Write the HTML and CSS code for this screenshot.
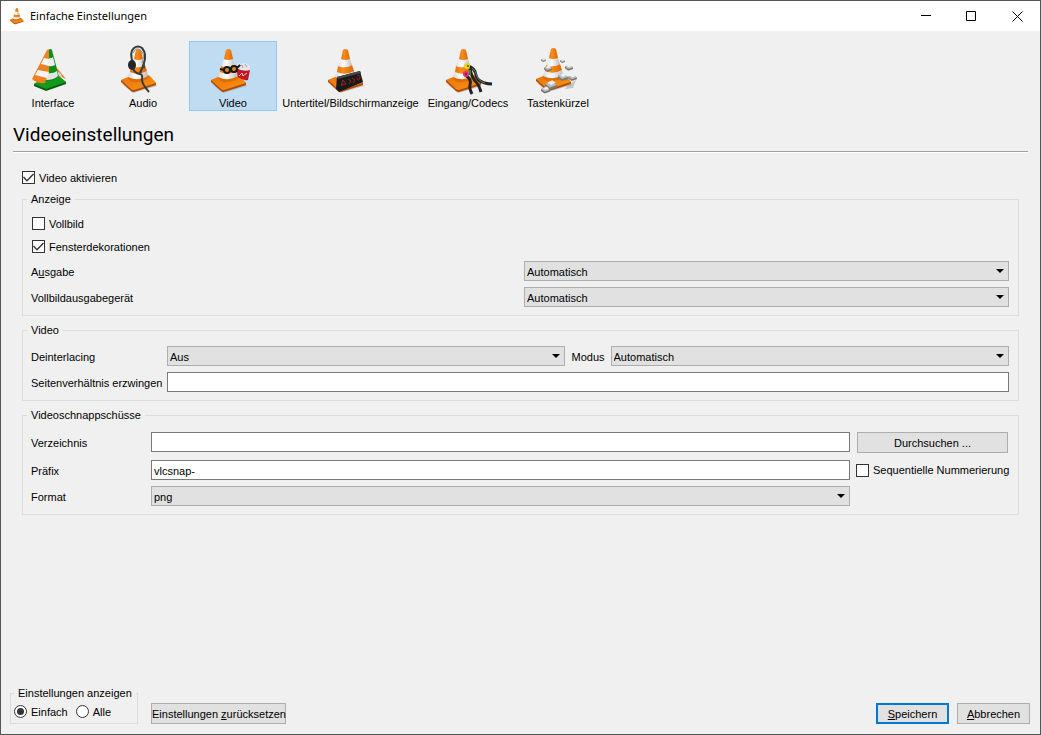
FILE: index.html
```html
<!doctype html>
<html lang="de">
<head>
<meta charset="utf-8">
<title>Einfache Einstellungen</title>
<link rel="stylesheet" href="styles.css">
</head>
<body>

<!-- shared icon parts -->
<svg class="defs" width="0" height="0" aria-hidden="true">
  <defs>
    <linearGradient id="orange" x1="0" x2="1" y1="0" y2="0">
      <stop offset="0" stop-color="#e27208"/>
      <stop offset=".35" stop-color="#fa8c18"/>
      <stop offset="1" stop-color="#dc6600"/>
    </linearGradient>
    <linearGradient id="white" x1="0" x2="1" y1="0" y2="0">
      <stop offset="0" stop-color="#dadada"/>
      <stop offset=".4" stop-color="#ffffff"/>
      <stop offset="1" stop-color="#bdbdbd"/>
    </linearGradient>
    <linearGradient id="base" x1="0" x2="1" y1="0" y2="1">
      <stop offset="0" stop-color="#e87408"/>
      <stop offset="1" stop-color="#fb9018"/>
    </linearGradient>
  </defs>
  <symbol id="cone" viewBox="0 0 48 48">
    <path d="M3 38L14 47L38 40L35 37L14 42Z" fill="#777" opacity=".35"/>
    <path d="M2 34L30 30L37 37V39L15 46Q13 46 12 45L2 36Z" fill="#b04c00"/>
    <path d="M2 34L9 31L28 29Q30 29 31 30L37 37L15 44Q13 44 12 43Z" fill="url(#base)"/>
    <path d="M9 32Q11 37 19 36Q28 35 30 31L29 29H10Z" fill="#e06c04"/>
    <path d="M11 25Q19 30 28 25L29 30Q20 36 9 31Z" fill="url(#white)"/>
    <path d="M12 20Q19 23 26 19L28 25Q19 30 11 26Z" fill="url(#orange)"/>
    <path d="M15 13Q19 15 24 13L26 19Q19 23 12 20Z" fill="url(#white)"/>
    <path d="M17 4Q19 2 22 4L24 13Q19 15 15 13Z" fill="url(#orange)"/>
  </symbol>
  <symbol id="key" viewBox="0 0 10 8">
    <path d="M0 3L6 1L10 4V6L4 8L0 5Z" fill="#777"/>
    <path d="M0 3L6 1L10 4L4 6Z" fill="#bbb"/>
    <path d="M2 2L6 0L9 2L5 4Z" fill="#eee"/>
  </symbol>
</svg>

<div class="window">

  <header class="titlebar">
    <svg class="app-icon" viewBox="0 1 40 47" aria-hidden="true"><use href="#cone" width="48" height="48"/></svg>
    <span class="title">Einfache Einstellungen</span>
    <button class="win-btn" aria-label="Minimieren"><svg width="11" height="11"><path d="M1 4.500H11"/></svg></button>
    <button class="win-btn" aria-label="Maximieren"><svg width="11" height="11"><path d="M.5 .5H9.500V9.500H.5Z"/></svg></button>
    <button class="win-btn" aria-label="Schließen"><svg width="11" height="11"><path d="M.5 .5L10.500 10.500M10.500 .5L.5 10.500"/></svg></button>
  </header>

  <nav class="toolbar">
    <button class="tool">
      <svg viewBox="0 0 48 48" aria-hidden="true">
        <path d="M27 21L37 33L33 31L27 29Z" fill="#e87a1c"/>
        <path d="M28 25L32 28L33 31L28 29Z" fill="#ddd"/>
        <path d="M5 38L28 30L37 36V38L17 45L5 40Z" fill="#075f0b"/>
        <path d="M5 38L14 32L30 30L37 36L17 43Z" fill="#139a1c"/>
        <path d="M19 4Q22 2 23 4L30 31Q25 36 16 35Z" fill="#0d8f18"/>
        <path d="M19 12Q22 13 24 11L26 19Q22 21 18 20Z" fill="#f0f0f0"/>
        <path d="M18 27Q24 28 28 25L29 30Q25 34 17 34Z" fill="#e4e4e4"/>
        <path d="M18 4Q19 3 20 4L20 25L16 37Q8 38 3 33Z" fill="#ef8120"/>
        <path d="M15 12L20 13L20 20L12 18Z" fill="#fafafa"/>
        <path d="M9 24L20 26L18 32L6 29Z" fill="#f4f4f4"/>
      </svg>
      Interface
    </button>
    <button class="tool">
      <svg viewBox="0 0 48 48" aria-hidden="true">
        <use href="#cone" width="48" height="48"/>
        <g fill="none" stroke="#333b40">
          <path d="M14 17Q10 6 15 2Q19 -1 23 2Q28 8 25 17Q23 23 21 27" stroke-width="2"/>
          <path d="M14 7Q18 -1 23 6Q26 10 23 17" stroke="#8b9297"/>
          <path d="M14 22Q15 27 21 28Q24 28 23 34Q23 38 30 46" stroke-width="2"/>
        </g>
        <ellipse cx="13" cy="19" rx="4" ry="5" fill="#24282b"/>
        <ellipse cx="25" cy="20" rx="1" ry="3" fill="#444"/>
      </svg>
      Audio
    </button>
    <button class="tool active">
      <svg viewBox="0 0 48 48" aria-hidden="true">
        <use href="#cone" width="48" height="48"/>
        <path d="M27 22L41 24L39 34Q34 35 29 31Z" fill="#c41622"/>
        <path d="M28 20Q28 16 32 18Q35 16 38 18Q42 19 41 24Q34 26 27 22Z" fill="#e4e5ec"/>
        <path d="M30 20L33 19L34 22M36 18L38 21" stroke="#9da1b8" fill="none"/>
        <path d="M30 30L33 27L34 30L38 27" stroke="#f6c9cb" fill="none"/>
        <g fill="#d98a1f" stroke="#1b1713" stroke-width="2">
          <ellipse cx="18" cy="24" rx="3" ry="3"/>
          <ellipse cx="25" cy="23" rx="3" ry="3"/>
          <path d="M11 23L15 24M28 22L31 19"/>
        </g>
      </svg>
      Video
    </button>
    <button class="tool wide">
      <svg viewBox="0 0 48 48" aria-hidden="true">
        <use href="#cone" x="-1" width="48" height="48"/>
        <path d="M10 31L33 25L36 36L12 46L9 43Z" fill="#191919"/>
        <path d="M10 31L33 25L34 27L11 33Z" fill="#484848"/>
        <path d="M14 40L16 34L19 38L15 39M21 33L24 35L22 38M25 32L28 34L26 37M30 30Q33 28 33 32Q31 36 30 32" fill="none" stroke="#a81f22"/>
      </svg>
      Untertitel/Bildschirmanzeige
    </button>
    <button class="tool">
      <svg viewBox="0 0 48 48" aria-hidden="true">
        <use href="#cone" width="48" height="48"/>
        <g fill="none" stroke="#222" stroke-width="3">
          <path d="M24 20Q31 22 32 29Q33 37 48 38"/>
          <path d="M26 23Q28 32 32 36Q35 39 37 46"/>
          <path d="M21 29Q28 33 26 39Q25 42 28 48"/>
        </g>
        <path d="M28 22Q32 25 33 30Q34 35 41 37" fill="none" stroke="#777"/>
        <path d="M26 24V29" stroke="#189325" stroke-width="2"/>
        <circle cx="23" cy="20" r="3" fill="#e7d322"/>
        <circle cx="24" cy="20" r="1" fill="#6a5b07"/>
        <circle cx="22" cy="28" r="3" fill="#e82c75"/>
        <circle cx="22" cy="28" r="1" fill="#8c0d3d"/>
      </svg>
      Eingang/Codecs
    </button>
    <button class="tool">
      <svg viewBox="0 0 48 48" aria-hidden="true">
        <use href="#cone" y="-1" width="48" height="48"/>
        <path d="M34 39L42 34L39 42L31 43Z" fill="#999" opacity=".5"/>
        <use href="#key" x="7" y="12" width="5" height="4"/>
        <use href="#key" x="10" y="19" width="8" height="7"/>
        <use href="#key" x="26" y="13" width="5" height="4"/>
        <use href="#key" x="31" y="18" width="8" height="7"/>
        <use href="#key" x="24" y="27" width="10" height="8"/>
        <use href="#key" x="34" y="28" width="9" height="7"/>
        <use href="#key" x="11" y="34" width="12" height="10"/>
        <use href="#key" x="7" y="40" width="9" height="8"/>
      </svg>
      Tastenkürzel
    </button>
  </nav>

  <h1>Videoeinstellungen</h1>

  <main>
    <label class="check"><input type="checkbox" checked>Video aktivieren</label>

    <fieldset class="group display">
      <legend>Anzeige</legend>
      <label class="check"><input type="checkbox">Vollbild</label>
      <label class="check"><input type="checkbox" checked>Fensterdekorationen</label>
      <div class="form halves">
        <label for="output">A<u>u</u>sgabe</label>
        <span class="select"><select id="output"><option>Automatisch</option></select></span>
        <label for="device">Vollbildausgabegerät</label>
        <span class="select"><select id="device"><option>Automatisch</option></select></span>
      </div>
    </fieldset>

    <fieldset class="group">
      <legend>Video</legend>
      <div class="form video">
        <label for="deint">Deinterlacing</label>
        <span class="select"><select id="deint"><option>Aus</option></select></span>
        <label for="mode">Modus</label>
        <span class="select"><select id="mode"><option>Automatisch</option></select></span>
        <label for="ratio">Seitenverhältnis erzwingen</label>
        <input class="field span" type="text" id="ratio">
      </div>
    </fieldset>

    <fieldset class="group">
      <legend>Videoschnappschüsse</legend>
      <div class="form snapshots">
        <label for="dir">Verzeichnis</label>
        <input class="field" type="text" id="dir">
        <button class="btn">Durchsuchen ...</button>
        <label for="prefix">Präfix</label>
        <input class="field" type="text" id="prefix" value="vlcsnap-">
        <label class="check"><input type="checkbox">Sequentielle Nummerierung</label>
        <label for="format">Format</label>
        <span class="select"><select id="format"><option>png</option></select></span>
      </div>
    </fieldset>
  </main>

  <footer>
    <fieldset class="group show">
      <legend>Einstellungen anzeigen</legend>
      <label class="check"><input type="radio" name="show" checked>Einfach</label>
      <label class="check"><input type="radio" name="show">Alle</label>
    </fieldset>
    <button class="btn reset">Einstellungen <u>z</u>urücksetzen</button>
    <button class="btn default"><u>S</u>peichern</button>
    <button class="btn"><u>A</u>bbrechen</button>
  </footer>

</div>

</body>
</html>
```

FILE: styles.css
```css
*{box-sizing:border-box}

body{
  margin:0;
  font:11px/14px "Liberation Sans",Arial,sans-serif;
  color:#000;
  background:#f0f0f0;
}

button,input,select{font:inherit;color:inherit;margin:0}
u{text-underline-offset:1px}
.defs{position:absolute}

.window{
  display:flex;
  flex-direction:column;
  min-height:100vh;
  border:1px solid #555;
}

/* ---------- title bar ---------- */
.titlebar{
  display:flex;
  align-items:center;
  height:30px;
  padding-left:8px;
  background:#fff;
}
.app-icon{width:16px;height:18px}
.title{
  flex:1;
  padding-left:5px;
  font:11px/16px "Noto Sans","Open Sans",sans-serif;
}
.win-btn{
  display:flex;align-items:center;justify-content:center;
  width:46px;height:28px;
  padding:0;
  border:0;
  background:none;
}
.win-btn svg{fill:none;stroke:#000}

/* ---------- toolbar ---------- */
.toolbar{
  display:flex;
  gap:2px;
  padding:10px 8px 0;
}
.tool{
  display:flex;
  flex-direction:column;
  align-items:center;
  min-width:88px;
  height:70px;
  padding:4px 0 0;
  border:1px solid transparent;
  background:none;
  white-space:nowrap;
}
.tool svg{width:48px;height:48px;margin-bottom:2px;overflow:visible}
.wide{min-width:143px}
.active{background:#c0dcf3;border-color:#90c8f6}

h1{
  margin:0 12px;
  padding:12px 0 4px;
  border-bottom:1px solid #a0a0a0;
  box-shadow:0 1px #fff;
  font:19px/24px Roboto,sans-serif;
}

/* ---------- settings ---------- */
main{flex:1;padding:14px 21px 0}

.check{display:flex;align-items:center;height:23px;gap:4px;white-space:nowrap}
.check input{
  appearance:none;
  flex:none;
  width:13px;height:13px;
  border:1px solid #333;
  background:#fff;
}
.check input:checked::before{
  content:"";
  display:block;
  width:11px;height:11px;
  background:#333;
  clip-path:polygon(0 50%,9% 42%,36% 70%,91% 14%,100% 23%,36% 88%);
}
.check input[type=radio]{border-radius:50%}
.check input[type=radio]:checked::before{
  width:7px;height:7px;
  margin:2px;
  border-radius:50%;
  clip-path:none;
}

.group{
  min-width:0;
  margin:7px 0 0;
  padding:9px 9px 8px 8px;
  border:1px solid #dcdcdc;
}
.group legend{margin-left:-4px;padding:0 4px;white-space:nowrap}
.display{margin-top:3px;padding-top:6px}
.display .check{padding-left:1px}
.display .form{margin-top:3px}

.form{display:grid;gap:6px;align-items:center}
.form > label:not(.check){padding-top:2px;white-space:nowrap}
.halves{grid-template-columns:1fr 1fr;column-gap:8px}
.video{grid-template-columns:130px 1fr auto 1fr}
.snapshots{
  grid-template-columns:114px 1fr 152px;
  grid-template-rows:22px 20px 20px;
  align-items:start;
  padding:1px 1px 0 0;
}
.snapshots > label:not(.check){padding-top:4px}
.snapshots .check{height:20px}
.snapshots .btn{margin-left:1px}
.span{grid-column:span 3}

.field{
  width:100%;height:20px;
  padding:1px 2px 0;
  border:1px solid #7a7a7a;
  background:#fff;
}

.select{position:relative;display:block;height:20px}
.select select{
  appearance:none;
  display:block;
  width:100%;height:20px;
  padding:1px 20px 0 2px;
  border:1px solid #adadad;
  border-radius:0;
  background:#e1e1e1;
}
.select::after{
  content:"";
  position:absolute;
  top:8px;right:5px;
  border:4px solid transparent;
  border-top-color:#000;
  border-bottom:0;
  pointer-events:none;
}

.btn{
  height:21px;
  padding:0;
  border:1px solid #adadad;
  background:#e1e1e1;
  white-space:nowrap;
}

/* ---------- bottom row ---------- */
footer{
  display:flex;
  align-items:flex-end;
  gap:8px;
  padding:0 10px 10px 9px;
}
footer .btn{width:73px}
footer .default{border:2px solid #0078d7}
.show{
  display:flex;
  gap:8px;
  width:128px;
  margin:0;
  padding:0 3px;
}
.group.show legend{margin-left:0}
footer .reset{width:135px;margin:0 auto 0 5px}
```
